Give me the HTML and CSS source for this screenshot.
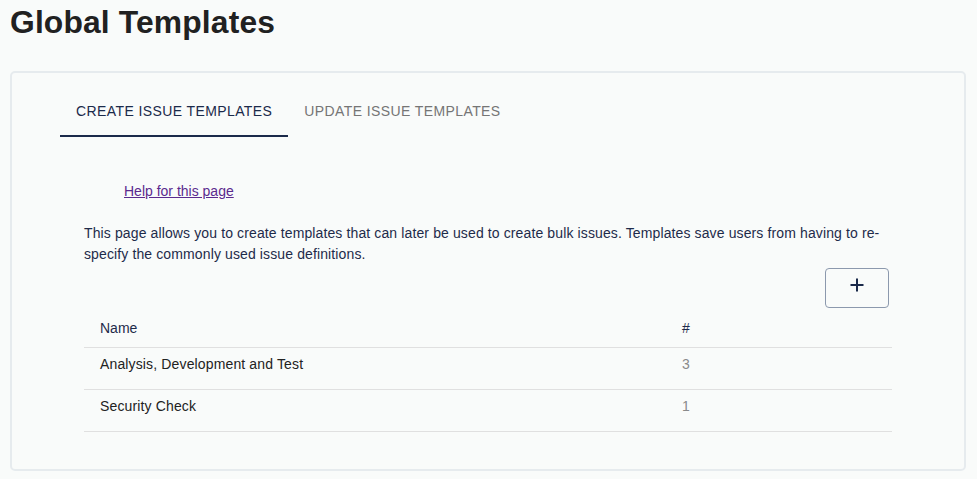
FILE: index.html
```html
<!DOCTYPE html>
<html>
<head>
<meta charset="utf-8">
<link rel="stylesheet" href="styles.css">
</head>
<body>
<h1 class="title">Global Templates</h1>
<div class="card">
  <div class="tabs">
    <div class="tab active">CREATE ISSUE TEMPLATES</div>
    <div class="tab">UPDATE ISSUE TEMPLATES</div>
  </div>
  <div class="content">
    <div class="help"><a href="#" class="help-link">Help for this page</a></div>
    <p class="intro">This page allows you to create templates that can later be used to create bulk issues. Templates save users from having to re-specify the commonly used issue definitions.</p>
    <div class="actions">
      <button class="add-btn" type="button" aria-label="Add">
        <svg width="16" height="16" viewBox="0 0 16 16"><path d="M8 1.5v13M1.5 8h13" stroke="#1b2a4a" stroke-width="2" fill="none"/></svg>
      </button>
    </div>
    <table class="grid">
      <thead>
        <tr><th class="c-name">Name</th><th class="c-num">#</th></tr>
      </thead>
      <tbody>
        <tr><td class="c-name">Analysis, Development and Test</td><td class="c-num">3</td></tr>
        <tr><td class="c-name">Security Check</td><td class="c-num">1</td></tr>
      </tbody>
    </table>
  </div>
</div>
</body>
</html>
```

FILE: styles.css
```css
html, body {
  margin: 0;
  padding: 0;
  background: #f9fbfa;
}
body {
  font-family: "Liberation Sans", Arial, sans-serif;
  padding: 0 10px;
}
.title {
  margin: 0;
  padding-top: 4px;
  font-size: 31.8px;
  line-height: 36px;
  font-weight: bold;
  color: #212121;
  letter-spacing: 0.15px;
}
.card {
  margin-top: 31px;
  width: 956px;
  height: 400px;
  border: 2px solid #e6ebee;
  border-radius: 5px;
  box-sizing: border-box;
  padding: 0 48px 0 48px;
}
.tabs {
  display: flex;
}
.tab {
  padding: 30px 16px 0;
  height: 32px;
  font-size: 14px;
  letter-spacing: 0.4px;
  color: #757575;
  border-bottom: 2px solid transparent;
}
.tab.active {
  color: #1b2a4a;
  border-bottom-color: #1b2a4a;
}
.content {
  padding: 0 24px;
}
.help {
  margin-top: 44px;
  padding-left: 40px;
  font-size: 14px;
  line-height: 20px;
}
.help-link {
  color: #5b2a8e;
  text-decoration: underline;
}
.intro {
  margin: 22px 0 0;
  font-size: 14px;
  line-height: 21px;
  color: #1e2b4a;
  letter-spacing: 0.12px;
}
.actions {
  display: flex;
  justify-content: flex-end;
  padding-right: 3px;
  margin-top: 3px;
}
.add-btn {
  width: 64px;
  height: 40px;
  border: 1px solid #8c99ad;
  border-radius: 4px;
  background: transparent;
  display: flex;
  align-items: center;
  justify-content: center;
  padding: 0 0 6px 0;
}
.grid {
  width: 808px;
  border-collapse: collapse;
  font-size: 14px;
  margin-top: 0;
}
.grid th, .grid td {
  text-align: left;
  font-weight: normal;
  padding: 0 16px;
  border-bottom: 1px solid #e0e0e0;
}
.grid th {
  height: 39px;
  color: #1e2b4a;
  vertical-align: middle;
}
.grid td {
  height: 42px;
  color: #222222;
  vertical-align: top;
  padding-top: 8px;
  box-sizing: border-box;
  letter-spacing: 0.14px;
}
.grid .c-name {
  width: 550px;
}
.grid td.c-num {
  color: #8a8a8a;
}
```
